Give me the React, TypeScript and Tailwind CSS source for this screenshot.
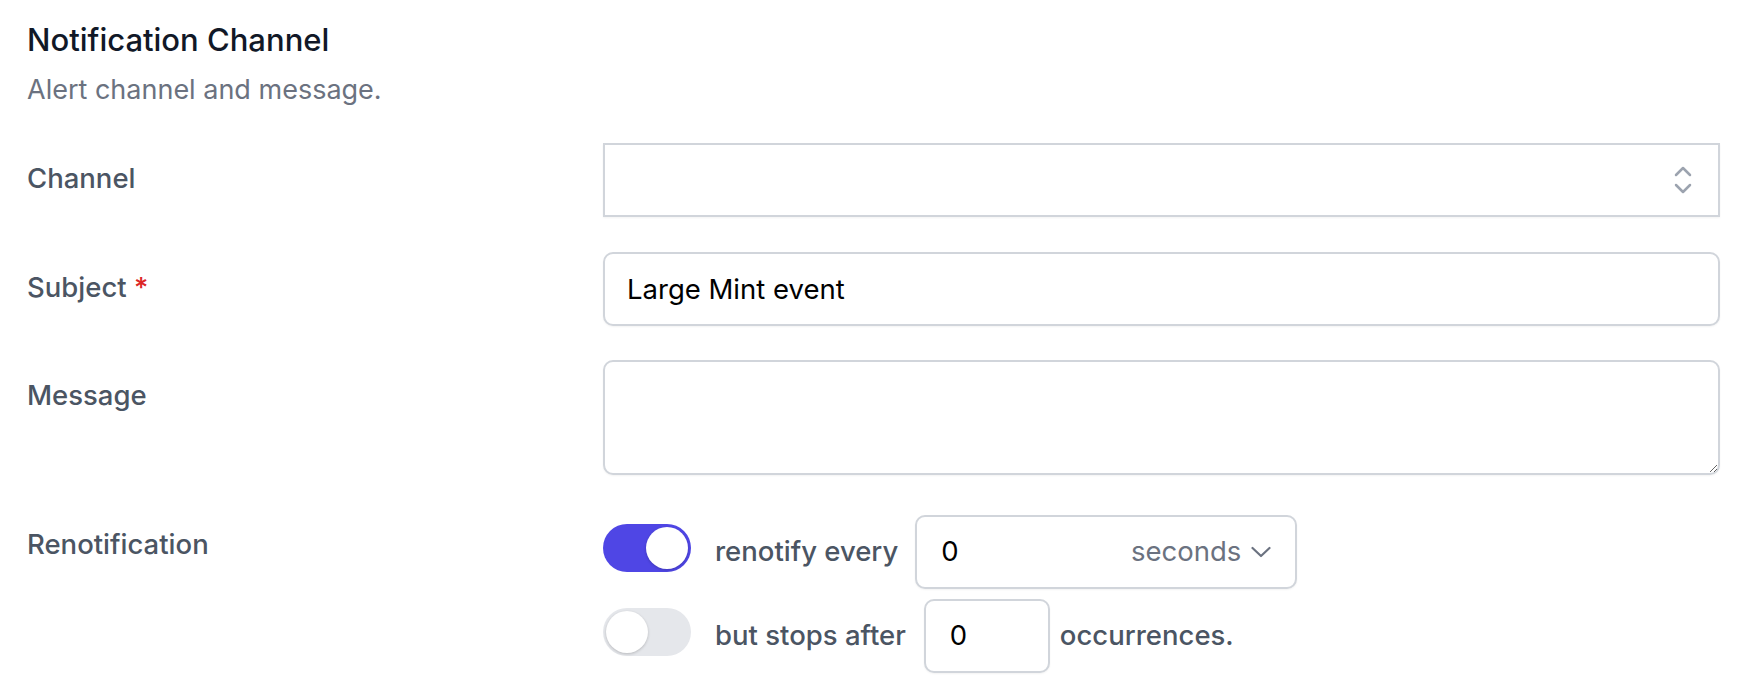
import React from "react";

function Label({ children, pt = "pt-[14px]" }: { children: React.ReactNode; pt?: string }) {
  return (
    <div className={`${pt} text-[27.5px] leading-[42px] font-medium text-[#4b5563]`}>{children}</div>
  );
}

function Toggle({ on }: { on: boolean }) {
  return (
    <div
      className={`relative mt-[9px] h-[48px] w-[88px] shrink-0 rounded-full ${on ? "bg-[#4f46e5]" : "bg-[#e5e7eb]"}`}
    >
      <div
        className={`absolute top-[3px] h-[42px] w-[42px] rounded-full bg-white shadow-[0_1px_3px_rgba(0,0,0,0.2)] ${on ? "left-[43px]" : "left-[3px]"}`}
      />
    </div>
  );
}

export default function App() {
  return (
    <div className="min-h-[690px] bg-white pl-[27px] pr-[28px] pt-[19px] font-['Inter',sans-serif]">
      <h2 className="text-[31px] leading-[42px] font-medium text-[#111827]">Notification Channel</h2>
      <p className="mt-[8px] text-[27px] leading-[42px] text-[#6b7280]">Alert channel and message.</p>

      <div className="mt-[32px] grid grid-cols-[548px_1fr] gap-x-[28px]">
        <Label>Channel</Label>
        <div className="flex h-[74px] items-center justify-end border-2 border-[#d1d5db] bg-white pr-[26px] shadow-[0_1px_2px_rgba(0,0,0,0.05)]">
          <svg width="18" height="30" viewBox="0 0 18 30" fill="none" stroke="#9ca3af" strokeWidth="2.5" strokeLinecap="round" strokeLinejoin="round">
            <polyline points="2,10 9,3 16,10" />
            <polyline points="2,20 9,27 16,20" />
          </svg>
        </div>
      </div>

      <div className="mt-[35px] grid grid-cols-[548px_1fr] gap-x-[28px]">
        <Label>
          Subject <span className="text-[#dc2626]">*</span>
        </Label>
        <input
          defaultValue="Large Mint event"
          className="h-[74px] w-full rounded-[10px] border-2 border-[#d1d5db] bg-white px-[22px] text-[27.5px] text-black shadow-[0_1px_2px_rgba(0,0,0,0.05)] outline-none"
        />
      </div>

      <div className="mt-[34px] grid grid-cols-[548px_1fr] gap-x-[28px]">
        <Label>Message</Label>
        <textarea className="block h-[115px] w-full rounded-[10px] border-2 border-[#d1d5db] bg-white shadow-[0_1px_2px_rgba(0,0,0,0.05)] outline-none" />
      </div>

      <div className="mt-[40px] grid grid-cols-[548px_1fr] gap-x-[28px]">
        <Label pt="pt-[8px]">Renotification</Label>
        <div className="flex flex-col gap-[10px]">
          <div className="flex items-start">
            <Toggle on />
            <span className="ml-[24px] self-center text-[27.5px] font-medium text-[#4b5563]">renotify every</span>
            <div className="ml-[17px] flex h-[74px] w-[382px] items-center justify-between rounded-[10px] border-2 border-[#d1d5db] bg-white pl-[24px] pr-[24px] shadow-[0_1px_2px_rgba(0,0,0,0.05)]">
              <span className="text-[27.5px] text-black">0</span>
              <span className="flex items-center gap-[10px] text-[27.5px] text-[#6b7280]">
                seconds
                <svg width="20" height="12" viewBox="0 0 20 12" fill="none" stroke="#6b7280" strokeWidth="2.2" strokeLinecap="round" strokeLinejoin="round">
                  <polyline points="1.5,2 10,10 18.5,2" />
                </svg>
              </span>
            </div>
          </div>
          <div className="flex items-start">
            <Toggle on={false} />
            <span className="ml-[24px] self-center text-[27.5px] font-medium text-[#4b5563]">but stops after</span>
            <div className="ml-[18px] flex h-[74px] w-[126px] items-center rounded-[10px] border-2 border-[#d1d5db] bg-white pl-[24px] shadow-[0_1px_2px_rgba(0,0,0,0.05)]">
              <span className="text-[27.5px] text-black">0</span>
            </div>
            <span className="ml-[10px] self-center text-[27.5px] font-medium text-[#4b5563]">occurrences.</span>
          </div>
        </div>
      </div>
    </div>
  );
}
